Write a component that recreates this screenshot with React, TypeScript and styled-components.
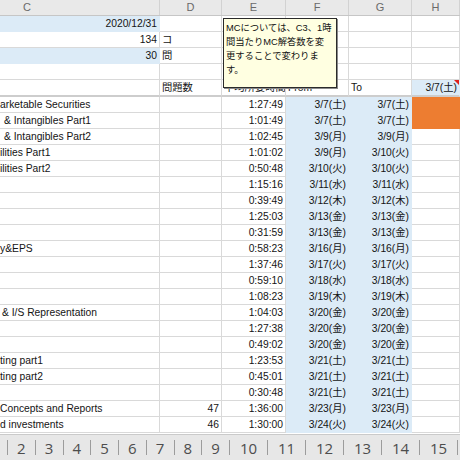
import React from 'react';
import styled, { createGlobalStyle, css } from 'styled-components';

const GlobalStyle = createGlobalStyle`
  html, body { margin: 0; padding: 0; background: #ffffff; }
  body { font-family: "Liberation Sans", "Noto Sans CJK JP", sans-serif; }
  #root { width: 460px; height: 460px; overflow: hidden; }
`;

const COLS = '160px 62px 64px 63px 63px 48px';
const BLUE = '#dcebf7';
const ORANGE = '#ed7d31';
const GRID = '#d9d9d9';

type Fill = 'blue' | 'orange' | undefined;

const Screen = styled.div`
  width: 460px;
  height: 460px;
  display: flex;
  flex-direction: column;
  overflow: hidden;
  background: #ffffff;
`;

const Sheet = styled.div`
  position: relative;
  flex: 1;
  overflow: hidden;
`;

const HeaderRow = styled.div`
  display: grid;
  grid-template-columns: ${COLS};
  height: 16px;
  box-sizing: border-box;
  background: #e9e9e9;
  border-bottom: 1px solid #c6c6c6;
`;

const ColumnHeader = styled.div<{ $pad?: number }>`
  box-sizing: border-box;
  border-right: 1px solid #d2d2d2;
  font-size: 11px;
  line-height: 15px;
  color: #6a6a6a;
  text-align: ${(p) => (p.$pad ? 'left' : 'center')};
  padding-left: ${(p) => p.$pad ?? 0}px;
  overflow: hidden;
`;

const Row = styled.div<{ $tall?: boolean }>`
  display: grid;
  grid-template-columns: ${COLS};
  height: ${(p) => (p.$tall ? 17 : 16)}px;
`;

const Cell = styled.div<{ $fill?: Fill; $align?: 'left' | 'right'; $lead?: number; $thick?: boolean }>`
  position: relative;
  box-sizing: border-box;
  height: 100%;
  padding: 0 2px 0 ${(p) => p.$lead ?? 2}px;
  font-size: 10.3px;
  line-height: 15px;
  color: #141414;
  white-space: nowrap;
  overflow: hidden;
  text-align: ${(p) => p.$align ?? 'left'};
  border-right: 1px solid ${GRID};
  border-bottom: ${(p) => (p.$thick ? '2px solid #cdcdcd' : `1px solid ${GRID}`)};
  ${(p) =>
    p.$fill === 'blue' &&
    css`
      background: ${BLUE};
      border-right-color: ${BLUE};
      border-bottom-color: ${p.$thick ? '#cdcdcd' : BLUE};
    `}
  ${(p) =>
    p.$fill === 'orange' &&
    css`
      background: ${ORANGE};
      border-right-color: ${ORANGE};
      border-bottom-color: ${ORANGE};
    `}
`;

const CommentMark = styled.span`
  position: absolute;
  top: 0;
  right: 0;
  width: 0;
  height: 0;
  border-top: 5px solid #e0201b;
  border-left: 5px solid transparent;
`;

const CommentBox = styled.div`
  position: absolute;
  left: 223px;
  top: 18px;
  width: 114px;
  height: 70px;
  box-sizing: border-box;
  background: #ffffe1;
  border: 1px solid #2a2a2a;
  box-shadow: 1px 1px 0 #8a8a8a;
  padding: 2px 0 0 2px;
  font-family: "Liberation Sans", "Noto Sans CJK JP", sans-serif;
  font-size: 9.3px;
  line-height: 14px;
  color: #111;
  white-space: nowrap;
  overflow: hidden;
`;

const TabBar = styled.div`
  height: 25px;
  flex: none;
  display: flex;
  align-items: center;
  padding-left: 7px;
  background: #e7e7e7;
  border-top: 1px solid #cacaca;
`;

const TabSep = styled.span`
  width: 1px;
  height: 15px;
  background: #9c9c9c;
  flex: none;
`;

const Tab = styled.span<{ $wide?: boolean }>`
  flex: none;
  width: ${(p) => (p.$wide ? 37 : 26.75)}px;
  text-align: center;
  font-family: "Open Sans", "Liberation Sans", sans-serif;
  font-size: 15px;
  line-height: 20px;
  color: #4d4d4d;
`;

type DataRow = {
  c?: string;
  lead?: number;
  d?: string;
  e: string;
  f: string;
  g: string;
  orange?: boolean;
};

const rows: DataRow[] = [
  { c: 'arketable Securities', lead: 0, e: '1:27:49', f: '3/7(土)', g: '3/7(土)', orange: true },
  { c: '& Intangibles Part1', lead: 4, e: '1:01:49', f: '3/7(土)', g: '3/7(土)', orange: true },
  { c: '& Intangibles Part2', lead: 4, e: '1:02:45', f: '3/9(月)', g: '3/9(月)' },
  { c: 'ilities Part1', lead: 0, e: '1:01:02', f: '3/9(月)', g: '3/10(火)' },
  { c: 'ilities Part2', lead: 0, e: '0:50:48', f: '3/10(火)', g: '3/10(火)' },
  { e: '1:15:16', f: '3/11(水)', g: '3/11(水)' },
  { e: '0:39:49', f: '3/12(木)', g: '3/12(木)' },
  { e: '1:25:03', f: '3/13(金)', g: '3/13(金)' },
  { e: '0:31:59', f: '3/13(金)', g: '3/13(金)' },
  { c: 'y&EPS', lead: 0, e: '0:58:23', f: '3/16(月)', g: '3/16(月)' },
  { e: '1:37:46', f: '3/17(火)', g: '3/17(火)' },
  { e: '0:59:10', f: '3/18(水)', g: '3/18(水)' },
  { e: '1:08:23', f: '3/19(木)', g: '3/19(木)' },
  { c: '& I/S Representation', lead: 2, e: '1:04:03', f: '3/20(金)', g: '3/20(金)' },
  { e: '1:27:38', f: '3/20(金)', g: '3/20(金)' },
  { e: '0:49:02', f: '3/20(金)', g: '3/20(金)' },
  { c: 'ting part1', lead: 0, e: '1:23:53', f: '3/21(土)', g: '3/21(土)' },
  { c: 'ting part2', lead: 0, e: '0:45:01', f: '3/21(土)', g: '3/21(土)' },
  { e: '0:30:48', f: '3/21(土)', g: '3/21(土)' },
  { c: 'Concepts and Reports', lead: 0, d: '47', e: '1:36:00', f: '3/23(月)', g: '3/23(月)' },
  { c: 'd investments', lead: 0, d: '46', e: '1:30:00', f: '3/24(火)', g: '3/24(火)' },
];

const tabs = [2, 3, 4, 5, 6, 7, 8, 9, 10, 11, 12, 13, 14, 15];

export default function App() {
  return (
    <>
      <GlobalStyle />
      <Screen>
        <Sheet>
          <HeaderRow>
            <ColumnHeader $pad={23}>C</ColumnHeader>
            <ColumnHeader>D</ColumnHeader>
            <ColumnHeader>E</ColumnHeader>
            <ColumnHeader>F</ColumnHeader>
            <ColumnHeader>G</ColumnHeader>
            <ColumnHeader>H</ColumnHeader>
          </HeaderRow>

          <Row>
            <Cell $fill="blue" $align="right">2020/12/31</Cell>
            <Cell />
            <Cell />
            <Cell />
            <Cell />
            <Cell />
          </Row>
          <Row>
            <Cell $align="right">134</Cell>
            <Cell>コ</Cell>
            <Cell />
            <Cell />
            <Cell />
            <Cell />
          </Row>
          <Row>
            <Cell $fill="blue" $align="right">30</Cell>
            <Cell>問</Cell>
            <Cell />
            <Cell />
            <Cell />
            <Cell />
          </Row>
          <Row>
            <Cell />
            <Cell />
            <Cell />
            <Cell />
            <Cell />
            <Cell />
          </Row>
          <Row $tall>
            <Cell $thick />
            <Cell $thick>問題数</Cell>
            <Cell $thick>平均所要時間</Cell>
            <Cell $thick>From</Cell>
            <Cell $thick>To</Cell>
            <Cell $thick $fill="blue" $align="right">
              3/7(土)
              <CommentMark />
            </Cell>
          </Row>

          {rows.map((r, i) => (
            <Row key={i}>
              <Cell $lead={r.lead}>{r.c}</Cell>
              <Cell $align="right">{r.d}</Cell>
              <Cell $align="right">{r.e}</Cell>
              <Cell $fill="blue" $align="right">{r.f}</Cell>
              <Cell $fill="blue" $align="right">{r.g}</Cell>
              <Cell $fill={r.orange ? 'orange' : undefined} />
            </Row>
          ))}

          <CommentBox>
            MCについては、C3、1時
            <br />
            間当たりMC解答数を変
            <br />
            更することで変わりま
            <br />
            す。
          </CommentBox>
        </Sheet>

        <TabBar>
          <TabSep />
          {tabs.map((t) => (
            <React.Fragment key={t}>
              <Tab $wide={t >= 10}>{t}</Tab>
              <TabSep />
            </React.Fragment>
          ))}
        </TabBar>
      </Screen>
    </>
  );
}
